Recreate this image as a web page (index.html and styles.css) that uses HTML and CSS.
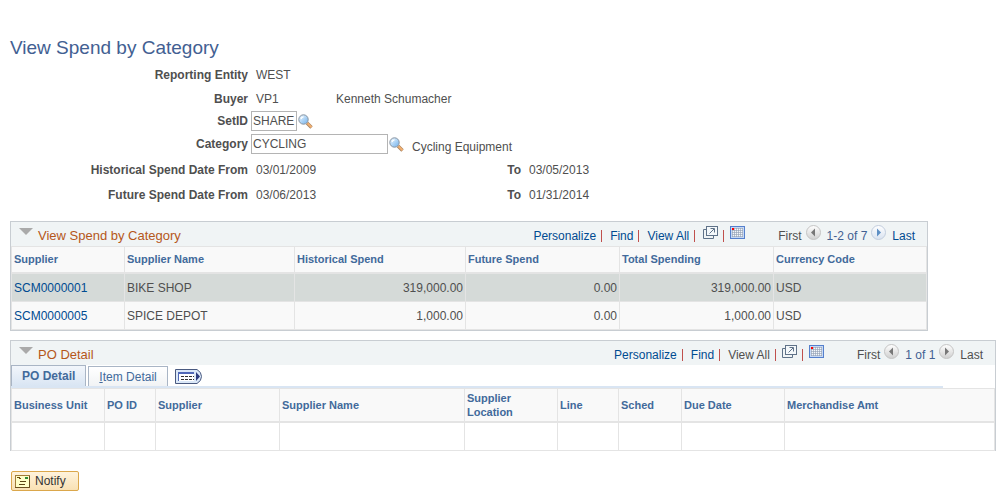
FILE: index.html
```
<!DOCTYPE html>
<html lang="en">
<head>
  <meta charset="UTF-8">
  <title>View Spend by Category</title>
  <link rel="stylesheet" href="styles.css">
</head>
<body>

  <!-- shared icons -->
  <svg class="defs" width="0" height="0">
    <defs>
      <linearGradient id="glass" x1="0" y1="0" x2="1" y2="1">
        <stop offset="0" stop-color="#f2faff"/>
        <stop offset="1" stop-color="#6fb0ec"/>
      </linearGradient>
      <linearGradient id="ball" x1="0" y1="0" x2="0" y2="1">
        <stop offset="0" stop-color="#ffffff"/>
        <stop offset="1" stop-color="#cfcfcf"/>
      </linearGradient>
      <linearGradient id="ballBlue" x1="0" y1="0" x2="0" y2="1">
        <stop offset="0" stop-color="#ffffff"/>
        <stop offset="1" stop-color="#d8e2f0"/>
      </linearGradient>
      <symbol id="lookup" viewBox="0 0 15 15">
        <path d="M9 9l4.5 4.5" stroke="#a58262" stroke-width="3.4"/>
        <path d="M9.5 9.200l4 4" stroke="#f3b070" stroke-width="2"/>
        <circle cx="5.500" cy="5.500" r="4.700" fill="url(#glass)" stroke="#8793a0"/>
        <path d="M3 5a3 3 0 0 1 2.500-2.200" fill="none" stroke="#fff" stroke-width="1.200"/>
      </symbol>
      <symbol id="zoom" viewBox="0 0 15 13">
        <path d="M3 3.500H.5v9h10V10" fill="none" stroke="#5f7288"/>
        <rect x="3.500" y=".5" width="11" height="9" fill="#f4f8fa" stroke="#5f7288"/>
        <path d="M6.500 7.500l4.500-4.500M7.500 2.500h4v4" fill="none" stroke="#5f7288"/>
      </symbol>
      <symbol id="download" viewBox="0 0 15 13">
        <rect x=".5" y=".5" width="14" height="12" fill="#c5d8f5" stroke="#5580cc"/>
        <rect x="2" y="2" width="11" height="9" fill="#f4f7fb"/>
        <path d="M2.500 2v9M4.500 2v9M6.500 2v9M8.500 2v9M10.500 2v9M12.500 2v9M2 2.500h11M2 4.500h11M2 6.500h11M2 8.500h11M2 10.500h11" stroke="#8d9cb3" stroke-opacity=".6"/>
        <rect x="2" y="2" width="2" height="2" fill="#f00"/>
      </symbol>
      <symbol id="prev" viewBox="0 0 15 15">
        <circle cx="7.500" cy="7.500" r="7" fill="url(#ball)" stroke="#c4c4c4"/>
        <path d="M9 3.500v8l-4-4z" fill="#777"/>
      </symbol>
      <symbol id="next" viewBox="0 0 15 15">
        <circle cx="7.500" cy="7.500" r="7" fill="url(#ball)" stroke="#c4c4c4"/>
        <path d="M6 3.500v8l4-4z" fill="#777"/>
      </symbol>
      <symbol id="nextOn" viewBox="0 0 15 15">
        <circle cx="7.500" cy="7.500" r="7" fill="url(#ballBlue)" stroke="#c2cddd"/>
        <path d="M6 3.500v8l4-4z" fill="#5d8fc4"/>
      </symbol>
    </defs>
  </svg>

  <h1>View Spend by Category</h1>

  <form class="criteria">
    <div class="row">
      <span class="label">Reporting Entity</span>
      <span class="value">WEST</span>
    </div>
    <div class="row">
      <span class="label">Buyer</span>
      <span class="value code">VP1</span>
      <span>Kenneth Schumacher</span>
    </div>
    <div class="row tight">
      <label class="label" for="setid">SetID</label>
      <input class="setid" id="setid" type="text" value="SHARE">
      <button class="icon-btn" type="button" aria-label="Look up SetID"><svg width="15" height="15"><use href="#lookup"/></svg></button>
    </div>
    <div class="row loose">
      <label class="label" for="category">Category</label>
      <input class="category" id="category" type="text" value="CYCLING">
      <button class="icon-btn" type="button" aria-label="Look up Category"><svg width="15" height="15"><use href="#lookup"/></svg></button>
      <span class="descr">Cycling Equipment</span>
    </div>
    <div class="row loose">
      <span class="label">Historical Spend Date From</span>
      <span class="value date">03/01/2009</span>
      <span class="label to">To</span>
      <span class="value">03/05/2013</span>
    </div>
    <div class="row">
      <span class="label">Future Spend Date From</span>
      <span class="value date">03/06/2013</span>
      <span class="label to">To</span>
      <span class="value">01/31/2014</span>
    </div>
  </form>

  <section class="grid spend">
    <div class="bar">
      <button class="collapse" type="button" aria-label="Collapse"></button>
      <h2>View Spend by Category</h2>
      <div class="tools">
        <a href="#">Personalize</a><i></i>
        <a href="#">Find</a><i></i>
        <a href="#">View All</a><i></i>
        <a class="icon" href="#" aria-label="Zoom"><svg width="15" height="13"><use href="#zoom"/></svg></a><i></i>
        <a class="icon" href="#" aria-label="Download"><svg width="15" height="13"><use href="#download"/></svg></a>
      </div>
      <div class="pager">
        <span>First</span>
        <svg width="15" height="15"><use href="#prev"/></svg>
        <span class="count">1-2 of 7</span>
        <a class="icon" href="#" aria-label="Next"><svg width="15" height="15"><use href="#nextOn"/></svg></a>
        <a class="last" href="#">Last</a>
      </div>
    </div>
    <table>
      <colgroup>
        <col class="w113"><col class="w170"><col class="w171"><col class="w154"><col class="w154"><col>
      </colgroup>
      <thead>
        <tr>
          <th>Supplier</th>
          <th>Supplier Name</th>
          <th>Historical Spend</th>
          <th>Future Spend</th>
          <th>Total Spending</th>
          <th>Currency Code</th>
        </tr>
      </thead>
      <tbody>
        <tr class="selected">
          <td><a href="#">SCM0000001</a></td>
          <td>BIKE SHOP</td>
          <td class="num">319,000.00</td>
          <td class="num">0.00</td>
          <td class="num">319,000.00</td>
          <td>USD</td>
        </tr>
        <tr>
          <td><a href="#">SCM0000005</a></td>
          <td>SPICE DEPOT</td>
          <td class="num">1,000.00</td>
          <td class="num">0.00</td>
          <td class="num">1,000.00</td>
          <td>USD</td>
        </tr>
      </tbody>
    </table>
  </section>

  <section class="grid detail">
    <div class="bar">
      <button class="collapse" type="button" aria-label="Collapse"></button>
      <h2>PO Detail</h2>
      <div class="tools">
        <a href="#">Personalize</a><i></i>
        <a href="#">Find</a><i></i>
        <span>View All</span><i></i>
        <a class="icon" href="#" aria-label="Zoom"><svg width="15" height="13"><use href="#zoom"/></svg></a><i></i>
        <a class="icon" href="#" aria-label="Download"><svg width="15" height="13"><use href="#download"/></svg></a>
      </div>
      <div class="pager">
        <span>First</span>
        <svg width="15" height="15"><use href="#prev"/></svg>
        <span class="count">1 of 1</span>
        <svg width="15" height="15"><use href="#next"/></svg>
        <span class="last">Last</span>
      </div>
    </div>
    <div class="tabs">
      <button class="tab active" type="button">PO Detail</button>
      <button class="tab" type="button"><u>I</u>tem Detail</button>
      <button class="icon-btn show-all" type="button" aria-label="Show all columns">
        <svg width="27" height="15" viewBox="0 0 27 15">
          <path d="M.5.500H22q4.500 2.500 4.500 7t-4.500 7H.5z" fill="#dbe8f8" stroke="#4a5a80"/>
          <rect x="3" y="3" width="16" height="9" fill="#fff"/>
          <rect x="3" y="3" width="16" height="2" fill="#5068b8"/>
          <path d="M3.500 3v9" stroke="#5068b8"/>
          <path d="M6 7.500h13M6 10.500h13" stroke="#333" stroke-dasharray="3 1"/>
          <path d="M21 3v9l4-4.500z" fill="#2d3c80"/>
        </svg>
      </button>
    </div>
    <table>
      <colgroup>
        <col class="w93"><col class="w51"><col class="w124"><col class="w185"><col class="w93"><col class="w61"><col class="w63"><col class="w103"><col>
      </colgroup>
      <thead>
        <tr>
          <th>Business Unit</th>
          <th>PO ID</th>
          <th>Supplier</th>
          <th>Supplier Name</th>
          <th>Supplier Location</th>
          <th>Line</th>
          <th>Sched</th>
          <th>Due Date</th>
          <th>Merchandise Amt</th>
        </tr>
      </thead>
      <tbody>
        <tr><td></td><td></td><td></td><td></td><td></td><td></td><td></td><td></td><td></td></tr>
      </tbody>
    </table>
  </section>

  <button class="notify" type="button">
    <svg width="15" height="13" viewBox="0 0 15 13">
      <rect x=".5" y=".5" width="14" height="12" fill="#ffffc8" stroke="#a07c38"/>
      <path d="M14.500 1v11.500H0" fill="none" stroke="#6b5020"/>
      <path d="M2 2.500h3M4 3.500h2" stroke="#6b4a10"/>
      <rect x="10" y="2" width="3" height="2" fill="#2f8a35"/>
      <path d="M5 6.500h6M4 9.500h6" stroke="#5a4515"/>
    </svg>
    Notify
  </button>

</body>
</html>
```
FILE: styles.css
```
* {
  box-sizing: border-box;
}

body {
  margin: 0;
  padding: 37px 3px 4px 10px;
  background: #fff;
  color: #4f4f4f;
  font-family: "Liberation Sans", Arial, sans-serif;
  font-size: 12px;
}

.defs {
  position: absolute;
}

svg {
  display: block;
}

button {
  font-family: inherit;
  font-size: 12px;
  cursor: pointer;
}

a {
  color: #004b91;
  text-decoration: none;
}

h1 {
  margin: 0 0 4px;
  font-size: 19px;
  font-weight: normal;
  line-height: 22px;
  color: #426092;
}

/* search criteria */
.row {
  display: flex;
  align-items: center;
  height: 24px;
}

.row.tight {
  height: 20px;
}

.row.loose {
  height: 26px;
}

.label {
  width: 238px;
  font-weight: bold;
  text-align: right;
}

.value {
  margin-left: 8px;
}

.code {
  width: 80px;
}

.date {
  width: 160px;
}

.label.to {
  width: 105px;
}

.row input {
  height: 20px;
  margin-left: 3px;
  padding: 0 1px;
  border: 1px solid #b4b4b4;
  color: #4f4f4f;
  font-family: inherit;
  font-size: 12px;
}

.setid {
  width: 46px;
}

.category {
  width: 137px;
}

.icon-btn {
  margin-left: 1px;
  padding: 0;
  border: 0;
  background: none;
}

.descr {
  margin-left: 8px;
  padding-top: 5px;
}

/* grids */
.grid {
  border: 1px solid #c8cdd2;
}

.spend {
  max-width: 918px;
  margin-top: 14px;
}

.detail {
  margin-top: 9px;
  border-bottom: 0;
}

.bar {
  display: flex;
  align-items: center;
  height: 24px;
  padding: 3px 12px 0 8px;
  background: #f0f4f5;
}

.collapse {
  width: 0;
  height: 0;
  margin-bottom: 8px;
  padding: 0;
  border: 7px solid transparent;
  border-top-color: #aaa;
  border-bottom: 0;
  background: none;
}

.bar h2 {
  margin: 0 auto 0 5px;
  font-size: 13px;
  font-weight: normal;
  color: #b5571a;
}

.tools,
.pager {
  display: flex;
  align-items: center;
}

.tools i {
  width: 1px;
  height: 12px;
  margin: 0 6px 0 5px;
  background: #c0504d;
}

.tools a:not(.icon) + i {
  margin: 0 8px 0 5px;
}

.bar svg {
  margin-bottom: 7px;
}

.pager {
  margin-left: 33px;
}

.pager svg {
  margin-left: 4px;
}

.count {
  margin-left: 6px;
  color: #426092;
}

.last {
  margin-left: 6px;
}

table {
  width: 100%;
  table-layout: fixed;
  border-spacing: 0;
  border-top: 1px solid #e4e4e4;
  border-left: 1px solid #e4e4e4;
}

th,
td {
  border-right: 1px solid #e4e4e4;
  border-bottom: 1px solid #e4e4e4;
  text-align: left;
}

th {
  height: 27px;
  padding: 0 2px 1px;
  border-bottom-width: 2px;
  background: #f9f9f9;
  color: #426a9b;
  font-size: 11px;
  line-height: 14px;
}

td {
  height: 28px;
  padding: 0 2px;
  background: #f9f9f9;
}

.selected td {
  background: #d5dad8;
}

.num {
  text-align: right;
}

.detail th {
  height: 34px;
}

.detail td {
  background: #fff;
}

.w51 { width: 51px; }
.w61 { width: 61px; }
.w63 { width: 63px; }
.w93 { width: 93px; }
.w103 { width: 103px; }
.w113 { width: 113px; }
.w124 { width: 124px; }
.w154 { width: 154px; }
.w170 { width: 170px; }
.w171 { width: 171px; }
.w185 { width: 185px; }

/* tabs */
.tabs {
  display: flex;
  align-items: flex-end;
  height: 23px;
  margin-right: 52px;
  border-bottom: 2px solid #d9e5f3;
}

.tab {
  height: 20px;
  margin-right: 2px;
  padding: 0 10px;
  border: 1px solid #a9b5c5;
  border-bottom: 0;
  background: linear-gradient(#fff, #f1f3f5);
  color: #426a9b;
}

.tab.active {
  height: 21px;
  background: linear-gradient(#f2f6fb, #d9e5f3);
  font-weight: bold;
}

.show-all {
  margin: 0 0 2px 5px;
}

.notify {
  display: flex;
  align-items: center;
  gap: 5px;
  height: 20px;
  margin: 20px 0 0 1px;
  padding: 0 12px 0 3px;
  border: 1px solid #dba74b;
  border-radius: 2px;
  background: linear-gradient(#fff3dc, #f9e1b4);
  color: #333;
}
```
